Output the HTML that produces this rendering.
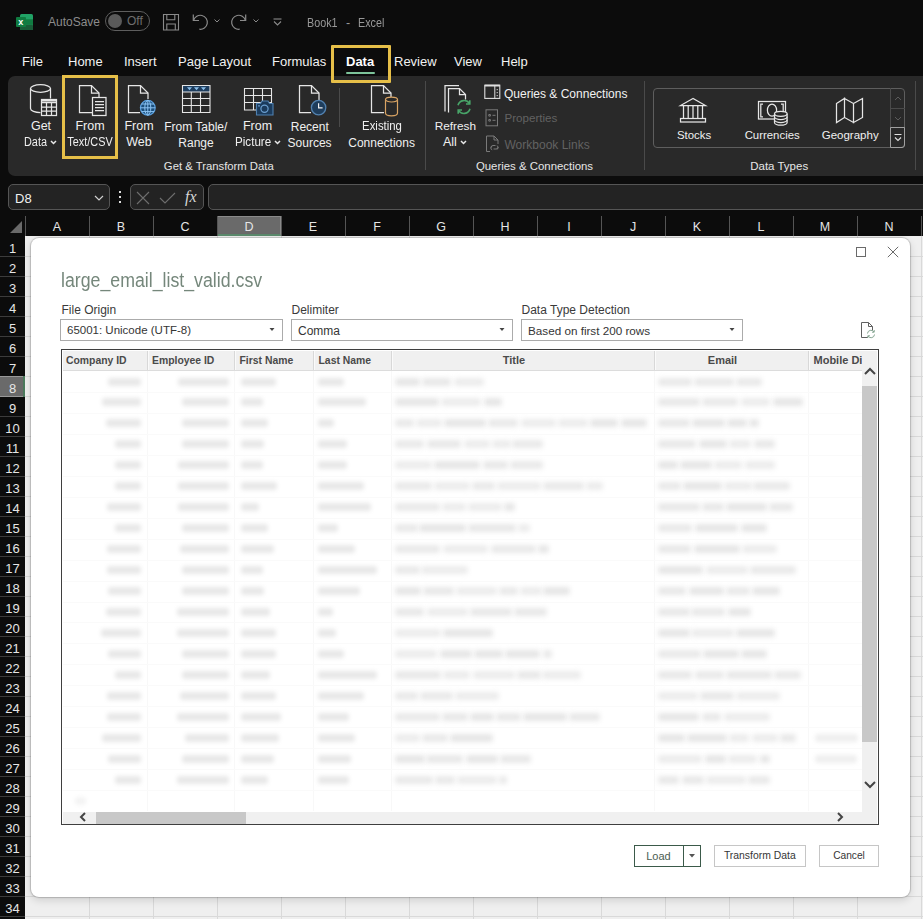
<!DOCTYPE html><html><head><meta charset="utf-8"><style>
*{margin:0;padding:0;box-sizing:border-box}
html,body{width:923px;height:919px;overflow:hidden;background:#0c0c0c;font-family:"Liberation Sans",sans-serif}
.a{position:absolute}
.t{position:absolute;white-space:nowrap;line-height:1}
.menu{color:#f2f2f2;font-size:13px;top:55px}
.rl{position:absolute;white-space:nowrap;line-height:1;color:#f0f0f0;font-size:12.5px;text-align:center}
.gl{position:absolute;white-space:nowrap;line-height:1;color:#e8e8e8;font-size:12px}
.sep{position:absolute;width:1px;background:#4a4a4a}
.ch{position:absolute;line-height:1;color:#e6e6e6;font-size:12.5px;top:221px;text-align:center;width:64px}
.rh{position:absolute;line-height:1;color:#e6e6e6;font-size:13px;width:25px;text-align:center;left:0}
svg{position:absolute;overflow:visible}
</style></head><body>
<div class="a" style="left:0;top:0;width:923px;height:236px;background:#0c0c0c"></div>
<svg style="left:16px;top:14px" width="17" height="16" viewBox="0 0 17 16"><rect x="4" y="0" width="13" height="16" rx="1.5" fill="#21a366"/><rect x="4" y="5.3" width="13" height="5.4" fill="#107c41"/><rect x="4" y="10.7" width="13" height="5.3" rx="1" fill="#185c37"/><rect x="0" y="3" width="10" height="10" rx="1" fill="#107c41"/><text x="2.2" y="11.3" font-size="9" font-family="Liberation Sans" font-weight="bold" fill="#fff">x</text></svg>
<div class="t" style="left:48px;top:16px;font-size:12px;color:#8c8c8c">AutoSave</div>
<div class="a" style="left:105px;top:11px;width:45px;height:20px;border:1.5px solid #5e5e5e;border-radius:10px"></div>
<div class="a" style="left:108px;top:14px;width:14px;height:14px;background:#5a5a5a;border-radius:50%"></div>
<div class="t" style="left:127px;top:15px;font-size:12px;color:#6e6e6e">Off</div>
<svg style="left:163px;top:14px" width="17" height="17" viewBox="0 0 17 17" fill="none" stroke="#8a8a8a" stroke-width="1.1"><path d="M0.5 0.5h15v15.5h-15z"/><path d="M3.8 0.5v5.3h8v-5.3"/><path d="M3.8 16v-6h8.5v6"/></svg>
<svg style="left:192px;top:14px" width="17" height="17" viewBox="0 0 17 17" fill="none" stroke="#8a8a8a" stroke-width="1.2"><path d="M1.3 0.5V6.5H7"/><path d="M1.6 6.4A7 7 0 1 1 7.3 15.2"/></svg>
<svg style="left:214px;top:19px" width="6" height="4" viewBox="0 0 6 4" fill="none" stroke="#8a8a8a" stroke-width="1"><path d="M0.5 0.5l2.5 2.5 2.5-2.5"/></svg>
<svg style="left:231px;top:14px" width="17" height="17" viewBox="0 0 17 17" fill="none" stroke="#8a8a8a" stroke-width="1.2"><path d="M14.7 0.5V6.5H9"/><path d="M14.4 6.4A7 7 0 1 0 8.7 15.2"/></svg>
<svg style="left:253px;top:19px" width="6" height="4" viewBox="0 0 6 4" fill="none" stroke="#8a8a8a" stroke-width="1"><path d="M0.5 0.5l2.5 2.5 2.5-2.5"/></svg>
<svg style="left:273px;top:18px" width="9" height="9" viewBox="0 0 9 9" fill="none" stroke="#8a8a8a" stroke-width="1.1"><path d="M0.5 1h8"/><path d="M1 3.5l3.5 3.5 3.5-3.5"/></svg>
<div class="t" style="left:307px;top:16.82px;font-size:12.5px;color:#989898;font-weight:normal;transform:scaleX(0.86);transform-origin:0 0">Book1</div>
<div class="t" style="left:346px;top:16.82px;font-size:12.5px;color:#989898;font-weight:normal;">-</div>
<div class="t" style="left:357.5px;top:16.82px;font-size:12.5px;color:#989898;font-weight:normal;transform:scaleX(0.86);transform-origin:0 0">Excel</div>
<div class="t menu" style="left:22px">File</div>
<div class="t menu" style="left:68px">Home</div>
<div class="t menu" style="left:124px">Insert</div>
<div class="t menu" style="left:178px">Page Layout</div>
<div class="t menu" style="left:272px">Formulas</div>
<div class="t menu" style="left:394px">Review</div>
<div class="t menu" style="left:454px">View</div>
<div class="t menu" style="left:501px">Help</div>
<div class="t menu" style="left:346px;font-weight:bold;color:#fff">Data</div>
<div class="a" style="left:346px;top:72px;width:29px;height:2px;background:#7dc49a;border-radius:1px"></div>
<div class="a" style="left:8px;top:76px;width:930px;height:100px;background:#292929;border-radius:7px"></div>
<svg style="left:29px;top:84px" width="30" height="33" viewBox="0 0 30 33" fill="none" stroke="#e6e6e6" stroke-width="1.25" ><path d="M1.5 4.5v20c0 2.2 4.4 4 10 4"/><ellipse cx="11.5" cy="4.5" rx="10" ry="3.8"/><path d="M21.5 4.5v10"/><rect x="12.5" y="15.5" width="15" height="16" fill="#292929"/><path d="M12.5 18.5h15M12.5 23h15M12.5 27.2h15M17.5 18.5v13M22.5 18.5v13"/><path d="M12.5 16.6h15" stroke-width="2"/></svg>
<div class="t" style="left:-109px;width:300px;text-align:center;top:120.42px;font-size:12.5px;color:#f0f0f0;font-weight:normal;">Get</div>
<div class="t" style="left:23.5px;top:136.42px;font-size:12.5px;color:#f0f0f0;font-weight:normal;transform:scaleX(0.87);transform-origin:0 0">Data</div>
<svg style="left:50px;top:140px" width="7" height="5" viewBox="0 0 7 5" fill="none" stroke="#e8e8e8" stroke-width="1.5"><path d="M1 1l2.5 2.5L6 1"/></svg>
<svg style="left:78px;top:84px" width="30" height="33" viewBox="0 0 30 33" fill="none" stroke="#e6e6e6" stroke-width="1.25" ><path d="M1.5 1.5h12l7.5 7.5v19.5H1.5z"/><path d="M13.5 1.5v7.5H21"/><rect x="14.5" y="13.5" width="13.5" height="18" fill="#292929"/><path d="M17 17.5h9M17 20.5h9M17 23.5h9M17 26.5h9"/></svg>
<div class="t" style="left:-60px;width:300px;text-align:center;top:120.42px;font-size:12.5px;color:#f0f0f0;font-weight:normal;">From</div>
<div class="t" style="left:-59.7px;width:300px;text-align:center;top:136.42px;font-size:12.5px;color:#f0f0f0;font-weight:normal;transform:scaleX(0.87)">Text/CSV</div>
<div class="a" style="left:62px;top:75px;width:56px;height:84px;border:3.3px solid #e6bf48"></div>
<svg style="left:127px;top:84px" width="30" height="33" viewBox="0 0 30 33" fill="none" stroke="#e6e6e6" stroke-width="1.25" ><path d="M13 28.5H1.5v-27h12l7.5 7.5v6"/><path d="M13.5 1.5v7.5H21"/></svg>
<svg style="left:139px;top:99px" width="18" height="18" viewBox="0 0 18 18"><circle cx="8.8" cy="8.8" r="7.4" fill="#1c4f7c" stroke="#5aa0e0" stroke-width="1.2"/><ellipse cx="8.8" cy="8.8" rx="3" ry="7.4" fill="none" stroke="#8cc4f4" stroke-width="1"/><path d="M1.4 8.8h14.8M2.5 5h12.6M2.5 12.6h12.6M8.8 1.4v14.8" stroke="#8cc4f4" stroke-width="1"/></svg>
<div class="t" style="left:-11px;width:300px;text-align:center;top:120.42px;font-size:12.5px;color:#f0f0f0;font-weight:normal;">From</div>
<div class="t" style="left:-11px;width:300px;text-align:center;top:136.42px;font-size:12.5px;color:#f0f0f0;font-weight:normal;">Web</div>
<svg style="left:181px;top:84px" width="31" height="30" viewBox="0 0 31 30"><rect x="1.5" y="1.5" width="27.5" height="6.5" fill="#1d3d5e"/><path d="M6 3.2l2.5 3 2.5-3zM13 3.2l2.5 3 2.5-3zM20 3.2l2.5 3 2.5-3z" fill="#8cc0ec"/><path d="M1.5 1.5h27.5v27H1.5zM1.5 8h27.5M1.5 14.5h27.5M1.5 21.5h27.5M10.3 8v20.5M19.5 8v20.5" fill="none" stroke="#e6e6e6" stroke-width="1.1"/></svg>
<div class="t" style="left:45.80000000000001px;width:300px;text-align:center;top:120.84px;font-size:12px;color:#f0f0f0;font-weight:normal;">From Table/</div>
<div class="t" style="left:46px;width:300px;text-align:center;top:136.84px;font-size:12px;color:#f0f0f0;font-weight:normal;">Range</div>
<svg style="left:243px;top:87px" width="33" height="30" viewBox="0 0 33 30"><path d="M1.5 1.5h27v21.5H1.5zM1.5 8.5h27M1.5 15.5h27M10.5 1.5v21.5M19.5 1.5v21.5" fill="none" stroke="#e6e6e6" stroke-width="1.1"/><path d="M13.5 16.5h4l1.5-2.5h6l1.5 2.5h3.5v11.5h-16.5z" fill="#1b3b5c" stroke="#4f80b0" stroke-width="1.1"/><circle cx="21.5" cy="21.8" r="3.6" fill="none" stroke="#6b9fd0" stroke-width="1.2"/><circle cx="16" cy="18.8" r="0.9" fill="#6b9fd0"/></svg>
<div class="t" style="left:107.5px;width:300px;text-align:center;top:120.42px;font-size:12.5px;color:#f0f0f0;font-weight:normal;">From</div>
<div class="t" style="left:234.5px;top:136.42px;font-size:12.5px;color:#f0f0f0;font-weight:normal;transform:scaleX(0.93);transform-origin:0 0">Picture</div>
<svg style="left:274px;top:140px" width="7" height="5" viewBox="0 0 7 5" fill="none" stroke="#e8e8e8" stroke-width="1.5"><path d="M1 1l2.5 2.5L6 1"/></svg>
<svg style="left:298px;top:84px" width="30" height="33" viewBox="0 0 30 33" fill="none" stroke="#e6e6e6" stroke-width="1.25" ><path d="M13 28.5H1.5v-27h12l7.5 7.5v7"/><path d="M13.5 1.5v7.5H21"/></svg>
<svg style="left:310px;top:99px" width="18" height="18" viewBox="0 0 18 18"><circle cx="8.6" cy="8.6" r="7.2" fill="#1e3d5c" stroke="#5282b0" stroke-width="1.3"/><path d="M8.6 4.2v4.6h4" fill="none" stroke="#f0f0f0" stroke-width="1.2"/></svg>
<div class="t" style="left:159.8px;width:300px;text-align:center;top:120.84px;font-size:12px;color:#f0f0f0;font-weight:normal;">Recent</div>
<div class="t" style="left:159.60000000000002px;width:300px;text-align:center;top:136.84px;font-size:12px;color:#f0f0f0;font-weight:normal;">Sources</div>
<div class="sep" style="left:339px;top:88px;height:39px"></div>
<svg style="left:370px;top:84px" width="30" height="33" viewBox="0 0 30 33" fill="none" stroke="#e6e6e6" stroke-width="1.25" ><path d="M14 28.5H1.5v-27h12l7.5 7.5v4"/><path d="M13.5 1.5v7.5H21"/></svg>
<svg style="left:384px;top:96px" width="16" height="21" viewBox="0 0 16 21"><path d="M1.5 3.5v13.5c0 1.6 2.6 2.8 6 2.8s6-1.2 6-2.8V3.5" fill="#292929" stroke="#d9a464" stroke-width="1.2"/><ellipse cx="7.5" cy="3.6" rx="6" ry="2.4" fill="#292929" stroke="#d9a464" stroke-width="1.2"/></svg>
<div class="t" style="left:231.5px;width:300px;text-align:center;top:120.42px;font-size:12.5px;color:#f0f0f0;font-weight:normal;transform:scaleX(0.91)">Existing</div>
<div class="t" style="left:231.60000000000002px;width:300px;text-align:center;top:136.84px;font-size:12px;color:#f0f0f0;font-weight:normal;">Connections</div>
<div class="sep" style="left:425px;top:81px;height:89px"></div>
<svg style="left:443px;top:84px" width="32" height="34" viewBox="0 0 32 34" fill="none" stroke="#e6e6e6" stroke-width="1.25" ><path d="M2 27.5V1.5h14"/><path d="M5.5 28.5v-24h11l6 6v5"/><path d="M16.5 4.5v6h6"/></svg>
<svg style="left:455px;top:98px" width="18" height="18" viewBox="0 0 18 18" fill="none" stroke="#48a468" stroke-width="1.6"><path d="M3 7.2a6.3 6.3 0 0 1 11.5-1.6"/><path d="M15 10.8a6.3 6.3 0 0 1-11.5 1.6"/><path d="M14.8 2.2v3.8h-3.8M3.2 15.8V12h3.8"/></svg>
<div class="t" style="left:305.3px;width:300px;text-align:center;top:121.01px;font-size:11.8px;color:#f0f0f0;font-weight:normal;">Refresh</div>
<div class="t" style="left:443px;top:136.42px;font-size:12.5px;color:#f0f0f0;font-weight:normal;">All</div>
<svg style="left:460px;top:140px" width="7" height="5" viewBox="0 0 7 5" fill="none" stroke="#e8e8e8" stroke-width="1.5"><path d="M1 1l2.5 2.5L6 1"/></svg>
<svg style="left:484px;top:84px" width="17" height="16" viewBox="0 0 17 16" fill="none" stroke="#e0e0e0"><rect x="0.8" y="1.2" width="15" height="13.2" stroke-width="1.1"/><path d="M0.8 1.6h15" stroke-width="1.8"/><path d="M10.8 1.5v13" stroke-width="1"/><path d="M13.2 5v1.2M13.2 8v1.2M13.2 11v1.2" stroke-width="1"/></svg>
<div class="t" style="left:504px;top:88.14px;font-size:12px;color:#f2f2f2;font-weight:normal;">Queries &amp; Connections</div>
<svg style="left:485px;top:109px" width="14" height="18" viewBox="0 0 14 18" fill="none" stroke="#7a7a7a" stroke-width="1"><rect x="1" y="0.8" width="11.5" height="16"/><path d="M3.8 5.5h1.6v1.6H3.8zM3.8 10.5h1.6v1.6H3.8zM7.5 6.3h3M7.5 11.3h3"/></svg>
<div class="t" style="left:504.5px;top:112.18px;font-size:11.6px;color:#626262;font-weight:normal;">Properties</div>
<svg style="left:485px;top:135px" width="16" height="18" viewBox="0 0 16 18" fill="none" stroke="#7a7a7a" stroke-width="1"><path d="M5 16.5H1.5V1h7.5l4 4v4"/><path d="M9 1v4h4"/><path d="M6 12.5a2 2 0 0 1 2-2h2.5M13 12a2 2 0 0 1-2 2h-2.5M7.2 14.8a1.8 1.8 0 0 1 0-3.5M11.8 10.8a1.8 1.8 0 0 1 0 3.5"/></svg>
<div class="t" style="left:504.5px;top:138.84px;font-size:12px;color:#626262;font-weight:normal;">Workbook Links</div>
<div class="t" style="left:384.5px;width:300px;text-align:center;top:161.35px;font-size:11.4px;color:#e6e6e6;font-weight:normal;">Queries &amp; Connections</div>
<div class="t" style="left:68.80000000000001px;width:300px;text-align:center;top:161.43px;font-size:11.3px;color:#e6e6e6;font-weight:normal;">Get &amp; Transform Data</div>
<div class="sep" style="left:644px;top:81px;height:89px"></div>
<div class="a" style="left:653px;top:88px;width:252px;height:60px;border:1px solid #5e5e5e;border-radius:4px"></div>
<div class="a" style="left:890px;top:88px;width:1px;height:60px;background:#4a4a4a"></div>
<div class="a" style="left:890px;top:108px;width:15px;height:1px;background:#4a4a4a"></div>
<div class="a" style="left:890px;top:127px;width:15px;height:21px;border:1px solid #a0a0a0;border-radius:0 0 3px 0"></div>
<svg style="left:894px;top:96px" width="8" height="5" viewBox="0 0 8 5" fill="none" stroke="#5a5a5a" stroke-width="1"><path d="M1 4l3-3 3 3"/></svg>
<svg style="left:894px;top:116px" width="8" height="5" viewBox="0 0 8 5" fill="none" stroke="#5a5a5a" stroke-width="1"><path d="M1 1l3 3 3-3"/></svg>
<svg style="left:893px;top:133px" width="10" height="10" viewBox="0 0 10 10" fill="none" stroke="#e0e0e0" stroke-width="1.1"><path d="M1.5 1.5h7M2 4.5l3 3 3-3"/></svg>
<svg style="left:679px;top:97px" width="30" height="27" viewBox="0 0 30 27" fill="none" stroke="#e6e6e6" stroke-width="1.25" ><path d="M14 1.5L1.5 8.5h25z"/><path d="M4.5 8.5v13M9.2 8.5v13M14 8.5v13M18.8 8.5v13M23.5 8.5v13"/><rect x="1.5" y="21.5" width="25" height="3.5"/></svg>
<div class="t" style="left:544px;width:300px;text-align:center;top:130.35px;font-size:11.4px;color:#f0f0f0;font-weight:normal;">Stocks</div>
<svg style="left:757px;top:100px" width="33" height="27" viewBox="0 0 33 27" fill="none" stroke="#e6e6e6" stroke-width="1.25" ><rect x="1.5" y="1.5" width="27" height="17.5"/><path d="M6 4.2H3.8v12.6H6M24 4.2h2.2v12.6H24"/><ellipse cx="15" cy="10.2" rx="4.6" ry="6"/><path d="M17.5 13.8v8.7c0 1.5 3 2.7 6.3 2.7s6.3-1.2 6.3-2.7v-8.7" fill="#292929"/><ellipse cx="23.8" cy="13.8" rx="6.3" ry="2.5" fill="#292929"/><path d="M17.5 16.8c0 1.5 3 2.7 6.3 2.7s6.3-1.2 6.3-2.7M17.5 19.8c0 1.5 3 2.7 6.3 2.7s6.3-1.2 6.3-2.7"/></svg>
<div class="t" style="left:622.2px;width:300px;text-align:center;top:130.35px;font-size:11.4px;color:#f0f0f0;font-weight:normal;">Currencies</div>
<svg style="left:835px;top:97px" width="30" height="27" viewBox="0 0 30 27" fill="none" stroke="#e6e6e6" stroke-width="1.25" ><path d="M1.5 6.5l8-5v19l-8 5zM9.5 1.5l9 5v19l-9-5zM18.5 6.5l9-5v19l-9 5z"/></svg>
<div class="t" style="left:700.2px;width:300px;text-align:center;top:130.27px;font-size:11.5px;color:#f0f0f0;font-weight:normal;">Geography</div>
<div class="t" style="left:629.2px;width:300px;text-align:center;top:161.27px;font-size:11.5px;color:#e6e6e6;font-weight:normal;">Data Types</div>
<div class="sep" style="left:915px;top:81px;height:89px"></div>
<div class="a" style="left:331px;top:45px;width:60px;height:38px;border:3.2px solid #e6bf48;border-radius:1px"></div>
<div class="a" style="left:8px;top:184px;width:102px;height:26px;border:1px solid #555;border-radius:5px;background:#232323"></div>
<div class="t" style="left:15px;top:191.5px;font-size:13px;color:#f0f0f0">D8</div>
<svg style="left:94px;top:195px" width="10" height="6" viewBox="0 0 10 6" fill="none" stroke="#d0d0d0" stroke-width="1.2"><path d="M1 1l4 4 4-4"/></svg>
<div class="a" style="left:119px;top:191px;width:2px;height:2px;background:#ddd"></div>
<div class="a" style="left:119px;top:196px;width:2px;height:2px;background:#ddd"></div>
<div class="a" style="left:119px;top:201px;width:2px;height:2px;background:#ddd"></div>
<div class="a" style="left:130px;top:184px;width:74px;height:26px;border:1px solid #555;border-radius:5px;background:#232323"></div>
<div class="a" style="left:208px;top:184px;width:730px;height:26px;border:1px solid #555;border-radius:5px;background:#232323"></div>
<svg style="left:136px;top:191px" width="14" height="14" viewBox="0 0 14 14" fill="none" stroke="#6e6e6e" stroke-width="1.1"><path d="M1 1l12 12M13 1L1 13"/></svg>
<svg style="left:159px;top:192px" width="17" height="12" viewBox="0 0 17 12" fill="none" stroke="#6e6e6e" stroke-width="1.1"><path d="M1 6l5 5L16 1"/></svg>
<div class="t" style="left:185px;top:189px;font-size:16px;color:#d6d6d6;font-family:'Liberation Serif',serif;font-style:italic">fx</div>
<div class="a" style="left:217px;top:216px;width:64px;height:20px;background:#6a6a6a;border:1px solid #8a8a8a;border-bottom:2px solid #5b8a6c"></div>
<div class="ch" style="left:25px">A</div>
<div class="a" style="left:89px;top:216px;width:1px;height:20px;background:#555"></div>
<div class="ch" style="left:89px">B</div>
<div class="a" style="left:153px;top:216px;width:1px;height:20px;background:#555"></div>
<div class="ch" style="left:153px">C</div>
<div class="a" style="left:217px;top:216px;width:1px;height:20px;background:#555"></div>
<div class="ch" style="left:217px">D</div>
<div class="a" style="left:281px;top:216px;width:1px;height:20px;background:#555"></div>
<div class="ch" style="left:281px">E</div>
<div class="a" style="left:345px;top:216px;width:1px;height:20px;background:#555"></div>
<div class="ch" style="left:345px">F</div>
<div class="a" style="left:409px;top:216px;width:1px;height:20px;background:#555"></div>
<div class="ch" style="left:409px">G</div>
<div class="a" style="left:473px;top:216px;width:1px;height:20px;background:#555"></div>
<div class="ch" style="left:473px">H</div>
<div class="a" style="left:537px;top:216px;width:1px;height:20px;background:#555"></div>
<div class="ch" style="left:537px">I</div>
<div class="a" style="left:601px;top:216px;width:1px;height:20px;background:#555"></div>
<div class="ch" style="left:601px">J</div>
<div class="a" style="left:665px;top:216px;width:1px;height:20px;background:#555"></div>
<div class="ch" style="left:665px">K</div>
<div class="a" style="left:729px;top:216px;width:1px;height:20px;background:#555"></div>
<div class="ch" style="left:729px">L</div>
<div class="a" style="left:793px;top:216px;width:1px;height:20px;background:#555"></div>
<div class="ch" style="left:793px">M</div>
<div class="a" style="left:857px;top:216px;width:1px;height:20px;background:#555"></div>
<div class="ch" style="left:857px">N</div>
<div class="a" style="left:921px;top:216px;width:1px;height:20px;background:#555"></div>
<svg style="left:10px;top:221px" width="12" height="12" viewBox="0 0 12 12"><path d="M12 0V12H0z" fill="#6a6a6a"/></svg>
<div class="a" style="left:25px;top:216px;width:1px;height:20px;background:#555"></div>
<div class="a" style="left:25px;top:236px;width:898px;height:683px;background:#efefef"></div>
<div class="a" style="left:25px;top:256px;width:898px;height:1px;background:#d9d9d9"></div>
<div class="a" style="left:25px;top:276px;width:898px;height:1px;background:#d9d9d9"></div>
<div class="a" style="left:25px;top:296px;width:898px;height:1px;background:#d9d9d9"></div>
<div class="a" style="left:25px;top:316px;width:898px;height:1px;background:#d9d9d9"></div>
<div class="a" style="left:25px;top:336px;width:898px;height:1px;background:#d9d9d9"></div>
<div class="a" style="left:25px;top:356px;width:898px;height:1px;background:#d9d9d9"></div>
<div class="a" style="left:25px;top:376px;width:898px;height:1px;background:#d9d9d9"></div>
<div class="a" style="left:25px;top:396px;width:898px;height:1px;background:#d9d9d9"></div>
<div class="a" style="left:25px;top:416px;width:898px;height:1px;background:#d9d9d9"></div>
<div class="a" style="left:25px;top:436px;width:898px;height:1px;background:#d9d9d9"></div>
<div class="a" style="left:25px;top:456px;width:898px;height:1px;background:#d9d9d9"></div>
<div class="a" style="left:25px;top:476px;width:898px;height:1px;background:#d9d9d9"></div>
<div class="a" style="left:25px;top:496px;width:898px;height:1px;background:#d9d9d9"></div>
<div class="a" style="left:25px;top:516px;width:898px;height:1px;background:#d9d9d9"></div>
<div class="a" style="left:25px;top:536px;width:898px;height:1px;background:#d9d9d9"></div>
<div class="a" style="left:25px;top:556px;width:898px;height:1px;background:#d9d9d9"></div>
<div class="a" style="left:25px;top:576px;width:898px;height:1px;background:#d9d9d9"></div>
<div class="a" style="left:25px;top:596px;width:898px;height:1px;background:#d9d9d9"></div>
<div class="a" style="left:25px;top:616px;width:898px;height:1px;background:#d9d9d9"></div>
<div class="a" style="left:25px;top:636px;width:898px;height:1px;background:#d9d9d9"></div>
<div class="a" style="left:25px;top:656px;width:898px;height:1px;background:#d9d9d9"></div>
<div class="a" style="left:25px;top:676px;width:898px;height:1px;background:#d9d9d9"></div>
<div class="a" style="left:25px;top:696px;width:898px;height:1px;background:#d9d9d9"></div>
<div class="a" style="left:25px;top:716px;width:898px;height:1px;background:#d9d9d9"></div>
<div class="a" style="left:25px;top:736px;width:898px;height:1px;background:#d9d9d9"></div>
<div class="a" style="left:25px;top:756px;width:898px;height:1px;background:#d9d9d9"></div>
<div class="a" style="left:25px;top:776px;width:898px;height:1px;background:#d9d9d9"></div>
<div class="a" style="left:25px;top:796px;width:898px;height:1px;background:#d9d9d9"></div>
<div class="a" style="left:25px;top:816px;width:898px;height:1px;background:#d9d9d9"></div>
<div class="a" style="left:25px;top:836px;width:898px;height:1px;background:#d9d9d9"></div>
<div class="a" style="left:25px;top:856px;width:898px;height:1px;background:#d9d9d9"></div>
<div class="a" style="left:25px;top:876px;width:898px;height:1px;background:#d9d9d9"></div>
<div class="a" style="left:25px;top:896px;width:898px;height:1px;background:#d9d9d9"></div>
<div class="a" style="left:25px;top:916px;width:898px;height:1px;background:#d9d9d9"></div>
<div class="a" style="left:89px;top:236px;width:1px;height:683px;background:#d9d9d9"></div>
<div class="a" style="left:153px;top:236px;width:1px;height:683px;background:#d9d9d9"></div>
<div class="a" style="left:217px;top:236px;width:1px;height:683px;background:#d9d9d9"></div>
<div class="a" style="left:281px;top:236px;width:1px;height:683px;background:#d9d9d9"></div>
<div class="a" style="left:345px;top:236px;width:1px;height:683px;background:#d9d9d9"></div>
<div class="a" style="left:409px;top:236px;width:1px;height:683px;background:#d9d9d9"></div>
<div class="a" style="left:473px;top:236px;width:1px;height:683px;background:#d9d9d9"></div>
<div class="a" style="left:537px;top:236px;width:1px;height:683px;background:#d9d9d9"></div>
<div class="a" style="left:601px;top:236px;width:1px;height:683px;background:#d9d9d9"></div>
<div class="a" style="left:665px;top:236px;width:1px;height:683px;background:#d9d9d9"></div>
<div class="a" style="left:729px;top:236px;width:1px;height:683px;background:#d9d9d9"></div>
<div class="a" style="left:793px;top:236px;width:1px;height:683px;background:#d9d9d9"></div>
<div class="a" style="left:857px;top:236px;width:1px;height:683px;background:#d9d9d9"></div>
<div class="a" style="left:921px;top:236px;width:1px;height:683px;background:#d9d9d9"></div>
<div class="a" style="left:0;top:236px;width:25px;height:683px;background:#0c0c0c"></div>
<div class="a" style="left:0;top:376px;width:25px;height:21px;background:#6a6a6a;border-top:1px solid #999;border-bottom:1px solid #999"></div>
<div class="a" style="left:23px;top:376px;width:2px;height:21px;background:#4b7a5c"></div>
<div class="rh" style="top:241.5px">1</div>
<div class="a" style="left:0;top:256px;width:25px;height:1px;background:#3c3c3c"></div>
<div class="rh" style="top:261.5px">2</div>
<div class="a" style="left:0;top:276px;width:25px;height:1px;background:#3c3c3c"></div>
<div class="rh" style="top:281.5px">3</div>
<div class="a" style="left:0;top:296px;width:25px;height:1px;background:#3c3c3c"></div>
<div class="rh" style="top:301.5px">4</div>
<div class="a" style="left:0;top:316px;width:25px;height:1px;background:#3c3c3c"></div>
<div class="rh" style="top:321.5px">5</div>
<div class="a" style="left:0;top:336px;width:25px;height:1px;background:#3c3c3c"></div>
<div class="rh" style="top:341.5px">6</div>
<div class="a" style="left:0;top:356px;width:25px;height:1px;background:#3c3c3c"></div>
<div class="rh" style="top:361.5px">7</div>
<div class="rh" style="top:381.5px">8</div>
<div class="rh" style="top:401.5px">9</div>
<div class="a" style="left:0;top:416px;width:25px;height:1px;background:#3c3c3c"></div>
<div class="rh" style="top:421.5px">10</div>
<div class="a" style="left:0;top:436px;width:25px;height:1px;background:#3c3c3c"></div>
<div class="rh" style="top:441.5px">11</div>
<div class="a" style="left:0;top:456px;width:25px;height:1px;background:#3c3c3c"></div>
<div class="rh" style="top:461.5px">12</div>
<div class="a" style="left:0;top:476px;width:25px;height:1px;background:#3c3c3c"></div>
<div class="rh" style="top:481.5px">13</div>
<div class="a" style="left:0;top:496px;width:25px;height:1px;background:#3c3c3c"></div>
<div class="rh" style="top:501.5px">14</div>
<div class="a" style="left:0;top:516px;width:25px;height:1px;background:#3c3c3c"></div>
<div class="rh" style="top:521.5px">15</div>
<div class="a" style="left:0;top:536px;width:25px;height:1px;background:#3c3c3c"></div>
<div class="rh" style="top:541.5px">16</div>
<div class="a" style="left:0;top:556px;width:25px;height:1px;background:#3c3c3c"></div>
<div class="rh" style="top:561.5px">17</div>
<div class="a" style="left:0;top:576px;width:25px;height:1px;background:#3c3c3c"></div>
<div class="rh" style="top:581.5px">18</div>
<div class="a" style="left:0;top:596px;width:25px;height:1px;background:#3c3c3c"></div>
<div class="rh" style="top:601.5px">19</div>
<div class="a" style="left:0;top:616px;width:25px;height:1px;background:#3c3c3c"></div>
<div class="rh" style="top:621.5px">20</div>
<div class="a" style="left:0;top:636px;width:25px;height:1px;background:#3c3c3c"></div>
<div class="rh" style="top:641.5px">21</div>
<div class="a" style="left:0;top:656px;width:25px;height:1px;background:#3c3c3c"></div>
<div class="rh" style="top:661.5px">22</div>
<div class="a" style="left:0;top:676px;width:25px;height:1px;background:#3c3c3c"></div>
<div class="rh" style="top:681.5px">23</div>
<div class="a" style="left:0;top:696px;width:25px;height:1px;background:#3c3c3c"></div>
<div class="rh" style="top:701.5px">24</div>
<div class="a" style="left:0;top:716px;width:25px;height:1px;background:#3c3c3c"></div>
<div class="rh" style="top:721.5px">25</div>
<div class="a" style="left:0;top:736px;width:25px;height:1px;background:#3c3c3c"></div>
<div class="rh" style="top:741.5px">26</div>
<div class="a" style="left:0;top:756px;width:25px;height:1px;background:#3c3c3c"></div>
<div class="rh" style="top:761.5px">27</div>
<div class="a" style="left:0;top:776px;width:25px;height:1px;background:#3c3c3c"></div>
<div class="rh" style="top:781.5px">28</div>
<div class="a" style="left:0;top:796px;width:25px;height:1px;background:#3c3c3c"></div>
<div class="rh" style="top:801.5px">29</div>
<div class="a" style="left:0;top:816px;width:25px;height:1px;background:#3c3c3c"></div>
<div class="rh" style="top:821.5px">30</div>
<div class="a" style="left:0;top:836px;width:25px;height:1px;background:#3c3c3c"></div>
<div class="rh" style="top:841.5px">31</div>
<div class="a" style="left:0;top:856px;width:25px;height:1px;background:#3c3c3c"></div>
<div class="rh" style="top:861.5px">32</div>
<div class="a" style="left:0;top:876px;width:25px;height:1px;background:#3c3c3c"></div>
<div class="rh" style="top:881.5px">33</div>
<div class="a" style="left:0;top:896px;width:25px;height:1px;background:#3c3c3c"></div>
<div class="rh" style="top:901.5px">34</div>
<div class="a" style="left:0;top:916px;width:25px;height:1px;background:#3c3c3c"></div>
<div class="rh" style="top:921.5px">35</div>
<div class="a" style="left:0;top:936px;width:25px;height:1px;background:#3c3c3c"></div>
<div class="a" style="left:31px;top:238px;width:879px;height:659px;background:#fff;border-radius:8px;box-shadow:0 0 1px 1px rgba(0,0,0,.18),0 3px 8px rgba(0,0,0,.14)"></div>
<div class="a" style="left:856px;top:247px;width:10px;height:10px;border:1px solid #6a6a6a"></div>
<svg style="left:887px;top:246px" width="12" height="12" viewBox="0 0 12 12" fill="none" stroke="#6a6a6a" stroke-width="1"><path d="M0.8 0.8l10.4 10.4M11.2 0.8L0.8 11.2"/></svg>
<div class="t" style="left:61px;top:269.8px;font-size:20px;color:#75877b;transform:scaleX(0.887);transform-origin:0 0">large_email_list_valid.csv</div>
<div class="t" style="left:61.5px;top:304.34px;font-size:12px;color:#3a3a3a;font-weight:normal;">File Origin</div>
<div class="t" style="left:291.5px;top:304.34px;font-size:12px;color:#3a3a3a;font-weight:normal;">Delimiter</div>
<div class="t" style="left:521.5px;top:304.34px;font-size:12px;color:#3a3a3a;font-weight:normal;">Data Type Detection</div>
<div class="a" style="left:60px;top:319px;width:223px;height:22px;border:1px solid #ababab;background:#fff"></div>
<div class="t" style="left:67px;top:325.27px;font-size:11.5px;color:#353535;font-weight:normal;">65001: Unicode (UTF-8)</div>
<svg style="left:269px;top:328px" width="6" height="4" viewBox="0 0 6 4"><path d="M0.5 0h5L3 3z" fill="#444"/></svg>
<div class="a" style="left:291px;top:319px;width:222px;height:22px;border:1px solid #ababab;background:#fff"></div>
<div class="t" style="left:298px;top:324.84px;font-size:12px;color:#353535;font-weight:normal;">Comma</div>
<svg style="left:499px;top:328px" width="6" height="4" viewBox="0 0 6 4"><path d="M0.5 0h5L3 3z" fill="#444"/></svg>
<div class="a" style="left:521px;top:319px;width:222px;height:22px;border:1px solid #ababab;background:#fff"></div>
<div class="t" style="left:528px;top:325.10px;font-size:11.7px;color:#353535;font-weight:normal;">Based on first 200 rows</div>
<svg style="left:729px;top:328px" width="6" height="4" viewBox="0 0 6 4"><path d="M0.5 0h5L3 3z" fill="#444"/></svg>
<svg style="left:860px;top:321px" width="16" height="18" viewBox="0 0 16 18" fill="none" stroke="#606060" stroke-width="1"><path d="M8 16.5H1.5V1.5h7l4 4v4"/><path d="M8.5 1.5v4h4"/></svg>
<svg style="left:866px;top:329px" width="10" height="10" viewBox="0 0 10 10" fill="none" stroke="#86a592" stroke-width="1"><path d="M1.5 4.5a3.5 3.5 0 0 1 6.5-1.5M8.5 5.5a3.5 3.5 0 0 1-6.5 1.5"/><path d="M8.2 1v2.2H6M1.8 9V6.8H4"/></svg>
<div class="a" style="left:61px;top:349px;width:818px;height:476px;border:1.5px solid #3f3f3f;background:#fff"></div>
<div class="a" style="left:63px;top:350.5px;width:799px;height:20px;background:#f0f0f0;border-bottom:1px solid #dcdcdc"></div>
<div class="a" style="left:147px;top:351px;width:1px;height:19px;background:#d8d8d8"></div>
<div class="a" style="left:148px;top:351px;width:1px;height:19px;background:#fafafa"></div>
<div class="a" style="left:234px;top:351px;width:1px;height:19px;background:#d8d8d8"></div>
<div class="a" style="left:235px;top:351px;width:1px;height:19px;background:#fafafa"></div>
<div class="a" style="left:313px;top:351px;width:1px;height:19px;background:#d8d8d8"></div>
<div class="a" style="left:314px;top:351px;width:1px;height:19px;background:#fafafa"></div>
<div class="a" style="left:391px;top:351px;width:1px;height:19px;background:#d8d8d8"></div>
<div class="a" style="left:392px;top:351px;width:1px;height:19px;background:#fafafa"></div>
<div class="a" style="left:654px;top:351px;width:1px;height:19px;background:#d8d8d8"></div>
<div class="a" style="left:655px;top:351px;width:1px;height:19px;background:#fafafa"></div>
<div class="a" style="left:808px;top:351px;width:1px;height:19px;background:#d8d8d8"></div>
<div class="a" style="left:809px;top:351px;width:1px;height:19px;background:#fafafa"></div>
<div class="t" style="left:66px;top:355.70px;font-size:10.4px;color:#4a4a4a;font-weight:bold;">Company ID</div>
<div class="t" style="left:152px;top:355.70px;font-size:10.4px;color:#4a4a4a;font-weight:bold;">Employee ID</div>
<div class="t" style="left:239.5px;top:355.70px;font-size:10.4px;color:#4a4a4a;font-weight:bold;">First Name</div>
<div class="t" style="left:318.5px;top:355.70px;font-size:10.4px;color:#4a4a4a;font-weight:bold;">Last Name</div>
<div class="t" style="left:364px;width:300px;text-align:center;top:355.19px;font-size:11px;color:#4a4a4a;font-weight:bold;">Title</div>
<div class="t" style="left:572.5px;width:300px;text-align:center;top:355.19px;font-size:11px;color:#4a4a4a;font-weight:bold;">Email</div>
<div class="t" style="left:813.5px;top:355.19px;font-size:11px;color:#4a4a4a;font-weight:bold;">Mobile Di</div>
<div class="a" style="left:147px;top:371px;width:1px;height:440px;background:#f8f8f8"></div>
<div class="a" style="left:234px;top:371px;width:1px;height:440px;background:#f8f8f8"></div>
<div class="a" style="left:313px;top:371px;width:1px;height:440px;background:#f8f8f8"></div>
<div class="a" style="left:391px;top:371px;width:1px;height:440px;background:#f8f8f8"></div>
<div class="a" style="left:654px;top:371px;width:1px;height:440px;background:#f8f8f8"></div>
<div class="a" style="left:808px;top:371px;width:1px;height:440px;background:#f8f8f8"></div>
<div class="a" style="left:862px;top:351px;width:15px;height:461px;background:#f0f0f0"></div>
<div class="a" style="left:862px;top:386px;width:15px;height:356px;background:#c8c8c8"></div>
<svg style="left:864px;top:367px" width="12" height="8" viewBox="0 0 12 8" fill="none" stroke="#444" stroke-width="2"><path d="M1 7l5-5 5 5"/></svg>
<svg style="left:864px;top:781px" width="12" height="8" viewBox="0 0 12 8" fill="none" stroke="#444" stroke-width="2"><path d="M1 1l5 5 5-5"/></svg>
<div class="a" style="left:63px;top:812px;width:814px;height:11.5px;background:#f0f0f0"></div>
<div class="a" style="left:96px;top:812px;width:150px;height:11.5px;background:#c8c8c8"></div>
<svg style="left:79px;top:812px" width="8" height="10" viewBox="0 0 8 10" fill="none" stroke="#444" stroke-width="2"><path d="M6 1L2 5l4 4"/></svg>
<svg style="left:836px;top:812px" width="8" height="10" viewBox="0 0 8 10" fill="none" stroke="#444" stroke-width="2"><path d="M2 1l4 4-4 4"/></svg>
<div class="a" style="left:108.0px;top:377.5px;width:33.0px;height:8px;background:#e8e8e8;opacity:1.0;filter:blur(2.2px);border-radius:3px"></div>
<div class="a" style="left:178.0px;top:377.5px;width:51.0px;height:8px;background:#e8e8e8;opacity:1.0;filter:blur(2.2px);border-radius:3px"></div>
<div class="a" style="left:240.5px;top:377.5px;width:35.0px;height:8px;background:#e8e8e8;opacity:1.0;filter:blur(2.2px);border-radius:3px"></div>
<div class="a" style="left:317.9px;top:377.5px;width:25.7px;height:8px;background:#e8e8e8;opacity:1.0;filter:blur(2.2px);border-radius:3px"></div>
<div class="a" style="left:395.2px;top:377.5px;width:25.1px;height:8px;background:#e6e6e6;opacity:1.0;filter:blur(2.5px);border-radius:3px"></div>
<div class="a" style="left:422.4px;top:377.5px;width:29.1px;height:8px;background:#e8e8e8;opacity:1.0;filter:blur(2.5px);border-radius:3px"></div>
<div class="a" style="left:453.6px;top:377.5px;width:30.0px;height:8px;background:#ececec;opacity:1.0;filter:blur(2.5px);border-radius:3px"></div>
<div class="a" style="left:657.8px;top:377.5px;width:34.5px;height:8px;background:#e9e9e9;opacity:1.0;filter:blur(2.5px);border-radius:3px"></div>
<div class="a" style="left:694.0px;top:377.5px;width:39.5px;height:8px;background:#e9e9e9;opacity:1.0;filter:blur(2.5px);border-radius:3px"></div>
<div class="a" style="left:735.6px;top:377.5px;width:26.2px;height:8px;background:#e9e9e9;opacity:1.0;filter:blur(2.5px);border-radius:3px"></div>
<div class="a" style="left:102.4px;top:398.4px;width:38.6px;height:8px;background:#e8e8e8;opacity:1.0;filter:blur(2.2px);border-radius:3px"></div>
<div class="a" style="left:181.6px;top:398.4px;width:47.4px;height:8px;background:#e8e8e8;opacity:1.0;filter:blur(2.2px);border-radius:3px"></div>
<div class="a" style="left:240.5px;top:398.4px;width:22.1px;height:8px;background:#e8e8e8;opacity:1.0;filter:blur(2.2px);border-radius:3px"></div>
<div class="a" style="left:317.9px;top:398.4px;width:47.8px;height:8px;background:#e8e8e8;opacity:1.0;filter:blur(2.2px);border-radius:3px"></div>
<div class="a" style="left:395.2px;top:398.4px;width:44.0px;height:8px;background:#e6e6e6;opacity:1.0;filter:blur(2.5px);border-radius:3px"></div>
<div class="a" style="left:441.3px;top:398.4px;width:40.2px;height:8px;background:#ececec;opacity:1.0;filter:blur(2.5px);border-radius:3px"></div>
<div class="a" style="left:483.7px;top:398.4px;width:18.1px;height:8px;background:#e6e6e6;opacity:1.0;filter:blur(2.5px);border-radius:3px"></div>
<div class="a" style="left:657.8px;top:398.4px;width:42.7px;height:8px;background:#e8e8e8;opacity:1.0;filter:blur(2.5px);border-radius:3px"></div>
<div class="a" style="left:702.3px;top:398.4px;width:35.8px;height:8px;background:#e9e9e9;opacity:1.0;filter:blur(2.5px);border-radius:3px"></div>
<div class="a" style="left:740.5px;top:398.4px;width:29.6px;height:8px;background:#ececec;opacity:1.0;filter:blur(2.5px);border-radius:3px"></div>
<div class="a" style="left:772.5px;top:398.4px;width:30.9px;height:8px;background:#e6e6e6;opacity:1.0;filter:blur(2.5px);border-radius:3px"></div>
<div class="a" style="left:106.0px;top:419.4px;width:35.0px;height:8px;background:#e8e8e8;opacity:1.0;filter:blur(2.2px);border-radius:3px"></div>
<div class="a" style="left:181.6px;top:419.4px;width:47.4px;height:8px;background:#e8e8e8;opacity:1.0;filter:blur(2.2px);border-radius:3px"></div>
<div class="a" style="left:240.5px;top:419.4px;width:27.5px;height:8px;background:#e8e8e8;opacity:1.0;filter:blur(2.2px);border-radius:3px"></div>
<div class="a" style="left:317.9px;top:419.4px;width:16.5px;height:8px;background:#e8e8e8;opacity:1.0;filter:blur(2.2px);border-radius:3px"></div>
<div class="a" style="left:395.2px;top:419.4px;width:19.1px;height:8px;background:#e9e9e9;opacity:1.0;filter:blur(2.5px);border-radius:3px"></div>
<div class="a" style="left:416.3px;top:419.4px;width:25.7px;height:8px;background:#ececec;opacity:1.0;filter:blur(2.5px);border-radius:3px"></div>
<div class="a" style="left:444.2px;top:419.4px;width:41.4px;height:8px;background:#e6e6e6;opacity:1.0;filter:blur(2.5px);border-radius:3px"></div>
<div class="a" style="left:487.9px;top:419.4px;width:30.6px;height:8px;background:#e9e9e9;opacity:1.0;filter:blur(2.5px);border-radius:3px"></div>
<div class="a" style="left:520.9px;top:419.4px;width:35.2px;height:8px;background:#ececec;opacity:1.0;filter:blur(2.5px);border-radius:3px"></div>
<div class="a" style="left:558.1px;top:419.4px;width:30.2px;height:8px;background:#ececec;opacity:1.0;filter:blur(2.5px);border-radius:3px"></div>
<div class="a" style="left:590.1px;top:419.4px;width:28.1px;height:8px;background:#e6e6e6;opacity:1.0;filter:blur(2.5px);border-radius:3px"></div>
<div class="a" style="left:620.6px;top:419.4px;width:26.8px;height:8px;background:#e6e6e6;opacity:1.0;filter:blur(2.5px);border-radius:3px"></div>
<div class="a" style="left:657.8px;top:419.4px;width:32.5px;height:8px;background:#e8e8e8;opacity:1.0;filter:blur(2.5px);border-radius:3px"></div>
<div class="a" style="left:692.4px;top:419.4px;width:32.5px;height:8px;background:#e6e6e6;opacity:1.0;filter:blur(2.5px);border-radius:3px"></div>
<div class="a" style="left:726.7px;top:419.4px;width:20.0px;height:8px;background:#e6e6e6;opacity:1.0;filter:blur(2.5px);border-radius:3px"></div>
<div class="a" style="left:749.1px;top:419.4px;width:10.1px;height:8px;background:#e6e6e6;opacity:1.0;filter:blur(2.5px);border-radius:3px"></div>
<div class="a" style="left:114.5px;top:440.4px;width:26.5px;height:8px;background:#e8e8e8;opacity:1.0;filter:blur(2.2px);border-radius:3px"></div>
<div class="a" style="left:181.6px;top:440.4px;width:47.4px;height:8px;background:#e8e8e8;opacity:1.0;filter:blur(2.2px);border-radius:3px"></div>
<div class="a" style="left:240.5px;top:440.4px;width:23.9px;height:8px;background:#e8e8e8;opacity:1.0;filter:blur(2.2px);border-radius:3px"></div>
<div class="a" style="left:317.9px;top:440.4px;width:29.4px;height:8px;background:#e8e8e8;opacity:1.0;filter:blur(2.2px);border-radius:3px"></div>
<div class="a" style="left:395.2px;top:440.4px;width:29.3px;height:8px;background:#e9e9e9;opacity:1.0;filter:blur(2.5px);border-radius:3px"></div>
<div class="a" style="left:426.6px;top:440.4px;width:34.5px;height:8px;background:#e8e8e8;opacity:1.0;filter:blur(2.5px);border-radius:3px"></div>
<div class="a" style="left:463.6px;top:440.4px;width:26.4px;height:8px;background:#ececec;opacity:1.0;filter:blur(2.5px);border-radius:3px"></div>
<div class="a" style="left:491.7px;top:440.4px;width:19.1px;height:8px;background:#ececec;opacity:1.0;filter:blur(2.5px);border-radius:3px"></div>
<div class="a" style="left:512.3px;top:440.4px;width:31.1px;height:8px;background:#e9e9e9;opacity:1.0;filter:blur(2.5px);border-radius:3px"></div>
<div class="a" style="left:657.8px;top:440.4px;width:38.7px;height:8px;background:#e8e8e8;opacity:1.0;filter:blur(2.5px);border-radius:3px"></div>
<div class="a" style="left:699.0px;top:440.4px;width:28.2px;height:8px;background:#e6e6e6;opacity:1.0;filter:blur(2.5px);border-radius:3px"></div>
<div class="a" style="left:729.0px;top:440.4px;width:22.1px;height:8px;background:#ececec;opacity:1.0;filter:blur(2.5px);border-radius:3px"></div>
<div class="a" style="left:753.5px;top:440.4px;width:21.3px;height:8px;background:#e8e8e8;opacity:1.0;filter:blur(2.5px);border-radius:3px"></div>
<div class="a" style="left:115.3px;top:461.3px;width:25.7px;height:8px;background:#e8e8e8;opacity:1.0;filter:blur(2.2px);border-radius:3px"></div>
<div class="a" style="left:178.0px;top:461.3px;width:51.0px;height:8px;background:#e8e8e8;opacity:1.0;filter:blur(2.2px);border-radius:3px"></div>
<div class="a" style="left:240.5px;top:461.3px;width:22.1px;height:8px;background:#e8e8e8;opacity:1.0;filter:blur(2.2px);border-radius:3px"></div>
<div class="a" style="left:317.9px;top:461.3px;width:29.4px;height:8px;background:#e8e8e8;opacity:1.0;filter:blur(2.2px);border-radius:3px"></div>
<div class="a" style="left:395.2px;top:461.3px;width:37.0px;height:8px;background:#ececec;opacity:1.0;filter:blur(2.5px);border-radius:3px"></div>
<div class="a" style="left:434.4px;top:461.3px;width:46.1px;height:8px;background:#e6e6e6;opacity:1.0;filter:blur(2.5px);border-radius:3px"></div>
<div class="a" style="left:482.5px;top:461.3px;width:25.7px;height:8px;background:#e8e8e8;opacity:1.0;filter:blur(2.5px);border-radius:3px"></div>
<div class="a" style="left:510.0px;top:461.3px;width:33.4px;height:8px;background:#e9e9e9;opacity:1.0;filter:blur(2.5px);border-radius:3px"></div>
<div class="a" style="left:657.8px;top:461.3px;width:19.8px;height:8px;background:#e6e6e6;opacity:1.0;filter:blur(2.5px);border-radius:3px"></div>
<div class="a" style="left:679.7px;top:461.3px;width:32.0px;height:8px;background:#e6e6e6;opacity:1.0;filter:blur(2.5px);border-radius:3px"></div>
<div class="a" style="left:713.9px;top:461.3px;width:28.6px;height:8px;background:#ececec;opacity:1.0;filter:blur(2.5px);border-radius:3px"></div>
<div class="a" style="left:744.7px;top:461.3px;width:30.1px;height:8px;background:#ececec;opacity:1.0;filter:blur(2.5px);border-radius:3px"></div>
<div class="a" style="left:114.5px;top:482.2px;width:26.5px;height:8px;background:#e8e8e8;opacity:1.0;filter:blur(2.2px);border-radius:3px"></div>
<div class="a" style="left:178.0px;top:482.2px;width:51.0px;height:8px;background:#e8e8e8;opacity:1.0;filter:blur(2.2px);border-radius:3px"></div>
<div class="a" style="left:240.5px;top:482.2px;width:36.8px;height:8px;background:#e8e8e8;opacity:1.0;filter:blur(2.2px);border-radius:3px"></div>
<div class="a" style="left:317.9px;top:482.2px;width:46.1px;height:8px;background:#e8e8e8;opacity:1.0;filter:blur(2.2px);border-radius:3px"></div>
<div class="a" style="left:395.2px;top:482.2px;width:36.8px;height:8px;background:#e9e9e9;opacity:1.0;filter:blur(2.5px);border-radius:3px"></div>
<div class="a" style="left:433.8px;top:482.2px;width:36.0px;height:8px;background:#ececec;opacity:1.0;filter:blur(2.5px);border-radius:3px"></div>
<div class="a" style="left:471.6px;top:482.2px;width:23.6px;height:8px;background:#e9e9e9;opacity:1.0;filter:blur(2.5px);border-radius:3px"></div>
<div class="a" style="left:497.4px;top:482.2px;width:43.3px;height:8px;background:#ececec;opacity:1.0;filter:blur(2.5px);border-radius:3px"></div>
<div class="a" style="left:542.5px;top:482.2px;width:41.6px;height:8px;background:#e9e9e9;opacity:1.0;filter:blur(2.5px);border-radius:3px"></div>
<div class="a" style="left:585.7px;top:482.2px;width:17.5px;height:8px;background:#ececec;opacity:1.0;filter:blur(2.5px);border-radius:3px"></div>
<div class="a" style="left:657.8px;top:482.2px;width:23.6px;height:8px;background:#e9e9e9;opacity:1.0;filter:blur(2.5px);border-radius:3px"></div>
<div class="a" style="left:683.4px;top:482.2px;width:38.9px;height:8px;background:#e6e6e6;opacity:1.0;filter:blur(2.5px);border-radius:3px"></div>
<div class="a" style="left:723.9px;top:482.2px;width:27.7px;height:8px;background:#ececec;opacity:1.0;filter:blur(2.5px);border-radius:3px"></div>
<div class="a" style="left:753.4px;top:482.2px;width:37.0px;height:8px;background:#e9e9e9;opacity:1.0;filter:blur(2.5px);border-radius:3px"></div>
<div class="a" style="left:107.2px;top:503.2px;width:33.8px;height:8px;background:#e8e8e8;opacity:1.0;filter:blur(2.2px);border-radius:3px"></div>
<div class="a" style="left:178.0px;top:503.2px;width:51.0px;height:8px;background:#e8e8e8;opacity:1.0;filter:blur(2.2px);border-radius:3px"></div>
<div class="a" style="left:240.5px;top:503.2px;width:18.4px;height:8px;background:#e8e8e8;opacity:1.0;filter:blur(2.2px);border-radius:3px"></div>
<div class="a" style="left:317.9px;top:503.2px;width:53.4px;height:8px;background:#e8e8e8;opacity:1.0;filter:blur(2.2px);border-radius:3px"></div>
<div class="a" style="left:395.2px;top:503.2px;width:44.5px;height:8px;background:#e9e9e9;opacity:1.0;filter:blur(2.5px);border-radius:3px"></div>
<div class="a" style="left:441.7px;top:503.2px;width:24.8px;height:8px;background:#ececec;opacity:1.0;filter:blur(2.5px);border-radius:3px"></div>
<div class="a" style="left:468.1px;top:503.2px;width:33.9px;height:8px;background:#ececec;opacity:1.0;filter:blur(2.5px);border-radius:3px"></div>
<div class="a" style="left:503.6px;top:503.2px;width:11.2px;height:8px;background:#e6e6e6;opacity:1.0;filter:blur(2.5px);border-radius:3px"></div>
<div class="a" style="left:657.8px;top:503.2px;width:42.2px;height:8px;background:#e8e8e8;opacity:1.0;filter:blur(2.5px);border-radius:3px"></div>
<div class="a" style="left:701.8px;top:503.2px;width:21.9px;height:8px;background:#e8e8e8;opacity:1.0;filter:blur(2.5px);border-radius:3px"></div>
<div class="a" style="left:725.5px;top:503.2px;width:41.8px;height:8px;background:#e6e6e6;opacity:1.0;filter:blur(2.5px);border-radius:3px"></div>
<div class="a" style="left:769.1px;top:503.2px;width:23.9px;height:8px;background:#e8e8e8;opacity:1.0;filter:blur(2.5px);border-radius:3px"></div>
<div class="a" style="left:115.3px;top:524.1px;width:25.7px;height:8px;background:#e8e8e8;opacity:1.0;filter:blur(2.2px);border-radius:3px"></div>
<div class="a" style="left:181.6px;top:524.1px;width:47.4px;height:8px;background:#e8e8e8;opacity:1.0;filter:blur(2.2px);border-radius:3px"></div>
<div class="a" style="left:240.5px;top:524.1px;width:27.5px;height:8px;background:#e8e8e8;opacity:1.0;filter:blur(2.2px);border-radius:3px"></div>
<div class="a" style="left:317.9px;top:524.1px;width:20.2px;height:8px;background:#e8e8e8;opacity:1.0;filter:blur(2.2px);border-radius:3px"></div>
<div class="a" style="left:395.2px;top:524.1px;width:22.7px;height:8px;background:#e9e9e9;opacity:1.0;filter:blur(2.5px);border-radius:3px"></div>
<div class="a" style="left:419.4px;top:524.1px;width:46.3px;height:8px;background:#e6e6e6;opacity:1.0;filter:blur(2.5px);border-radius:3px"></div>
<div class="a" style="left:468.1px;top:524.1px;width:47.6px;height:8px;background:#e8e8e8;opacity:1.0;filter:blur(2.5px);border-radius:3px"></div>
<div class="a" style="left:517.6px;top:524.1px;width:12.8px;height:8px;background:#ececec;opacity:1.0;filter:blur(2.5px);border-radius:3px"></div>
<div class="a" style="left:657.8px;top:524.1px;width:34.3px;height:8px;background:#e9e9e9;opacity:1.0;filter:blur(2.5px);border-radius:3px"></div>
<div class="a" style="left:694.5px;top:524.1px;width:43.8px;height:8px;background:#e6e6e6;opacity:1.0;filter:blur(2.5px);border-radius:3px"></div>
<div class="a" style="left:740.7px;top:524.1px;width:26.3px;height:8px;background:#e6e6e6;opacity:1.0;filter:blur(2.5px);border-radius:3px"></div>
<div class="a" style="left:107.2px;top:545.1px;width:33.8px;height:8px;background:#e8e8e8;opacity:1.0;filter:blur(2.2px);border-radius:3px"></div>
<div class="a" style="left:179.8px;top:545.1px;width:49.2px;height:8px;background:#e8e8e8;opacity:1.0;filter:blur(2.2px);border-radius:3px"></div>
<div class="a" style="left:240.5px;top:545.1px;width:33.1px;height:8px;background:#e8e8e8;opacity:1.0;filter:blur(2.2px);border-radius:3px"></div>
<div class="a" style="left:317.9px;top:545.1px;width:36.8px;height:8px;background:#e8e8e8;opacity:1.0;filter:blur(2.2px);border-radius:3px"></div>
<div class="a" style="left:395.2px;top:545.1px;width:45.1px;height:8px;background:#e9e9e9;opacity:1.0;filter:blur(2.5px);border-radius:3px"></div>
<div class="a" style="left:442.5px;top:545.1px;width:45.7px;height:8px;background:#ececec;opacity:1.0;filter:blur(2.5px);border-radius:3px"></div>
<div class="a" style="left:490.6px;top:545.1px;width:45.0px;height:8px;background:#e9e9e9;opacity:1.0;filter:blur(2.5px);border-radius:3px"></div>
<div class="a" style="left:537.7px;top:545.1px;width:10.9px;height:8px;background:#e6e6e6;opacity:1.0;filter:blur(2.5px);border-radius:3px"></div>
<div class="a" style="left:657.8px;top:545.1px;width:33.7px;height:8px;background:#e8e8e8;opacity:1.0;filter:blur(2.5px);border-radius:3px"></div>
<div class="a" style="left:693.5px;top:545.1px;width:46.2px;height:8px;background:#e6e6e6;opacity:1.0;filter:blur(2.5px);border-radius:3px"></div>
<div class="a" style="left:741.7px;top:545.1px;width:35.7px;height:8px;background:#ececec;opacity:1.0;filter:blur(2.5px);border-radius:3px"></div>
<div class="a" style="left:107.2px;top:566.0px;width:33.8px;height:8px;background:#e8e8e8;opacity:1.0;filter:blur(2.2px);border-radius:3px"></div>
<div class="a" style="left:181.6px;top:566.0px;width:47.4px;height:8px;background:#e8e8e8;opacity:1.0;filter:blur(2.2px);border-radius:3px"></div>
<div class="a" style="left:240.5px;top:566.0px;width:22.1px;height:8px;background:#e8e8e8;opacity:1.0;filter:blur(2.2px);border-radius:3px"></div>
<div class="a" style="left:317.9px;top:566.0px;width:58.9px;height:8px;background:#e8e8e8;opacity:1.0;filter:blur(2.2px);border-radius:3px"></div>
<div class="a" style="left:395.2px;top:566.0px;width:24.6px;height:8px;background:#e9e9e9;opacity:1.0;filter:blur(2.5px);border-radius:3px"></div>
<div class="a" style="left:421.4px;top:566.0px;width:46.6px;height:8px;background:#ececec;opacity:1.0;filter:blur(2.5px);border-radius:3px"></div>
<div class="a" style="left:657.8px;top:566.0px;width:45.7px;height:8px;background:#e6e6e6;opacity:1.0;filter:blur(2.5px);border-radius:3px"></div>
<div class="a" style="left:705.8px;top:566.0px;width:42.7px;height:8px;background:#ececec;opacity:1.0;filter:blur(2.5px);border-radius:3px"></div>
<div class="a" style="left:750.0px;top:566.0px;width:45.6px;height:8px;background:#e9e9e9;opacity:1.0;filter:blur(2.5px);border-radius:3px"></div>
<div class="a" style="left:107.9px;top:587.0px;width:33.1px;height:8px;background:#e8e8e8;opacity:1.0;filter:blur(2.2px);border-radius:3px"></div>
<div class="a" style="left:181.6px;top:587.0px;width:47.4px;height:8px;background:#e8e8e8;opacity:1.0;filter:blur(2.2px);border-radius:3px"></div>
<div class="a" style="left:240.5px;top:587.0px;width:23.9px;height:8px;background:#e8e8e8;opacity:1.0;filter:blur(2.2px);border-radius:3px"></div>
<div class="a" style="left:317.9px;top:587.0px;width:42.3px;height:8px;background:#e8e8e8;opacity:1.0;filter:blur(2.2px);border-radius:3px"></div>
<div class="a" style="left:395.2px;top:587.0px;width:26.1px;height:8px;background:#e6e6e6;opacity:1.0;filter:blur(2.5px);border-radius:3px"></div>
<div class="a" style="left:423.3px;top:587.0px;width:30.7px;height:8px;background:#e8e8e8;opacity:1.0;filter:blur(2.5px);border-radius:3px"></div>
<div class="a" style="left:455.9px;top:587.0px;width:41.3px;height:8px;background:#ececec;opacity:1.0;filter:blur(2.5px);border-radius:3px"></div>
<div class="a" style="left:498.7px;top:587.0px;width:19.6px;height:8px;background:#e9e9e9;opacity:1.0;filter:blur(2.5px);border-radius:3px"></div>
<div class="a" style="left:520.0px;top:587.0px;width:21.7px;height:8px;background:#ececec;opacity:1.0;filter:blur(2.5px);border-radius:3px"></div>
<div class="a" style="left:543.3px;top:587.0px;width:27.2px;height:8px;background:#e6e6e6;opacity:1.0;filter:blur(2.5px);border-radius:3px"></div>
<div class="a" style="left:657.8px;top:587.0px;width:28.5px;height:8px;background:#e8e8e8;opacity:1.0;filter:blur(2.5px);border-radius:3px"></div>
<div class="a" style="left:688.5px;top:587.0px;width:35.6px;height:8px;background:#e6e6e6;opacity:1.0;filter:blur(2.5px);border-radius:3px"></div>
<div class="a" style="left:725.9px;top:587.0px;width:23.7px;height:8px;background:#e9e9e9;opacity:1.0;filter:blur(2.5px);border-radius:3px"></div>
<div class="a" style="left:751.5px;top:587.0px;width:28.5px;height:8px;background:#e6e6e6;opacity:1.0;filter:blur(2.5px);border-radius:3px"></div>
<div class="a" style="left:106.0px;top:608.0px;width:35.0px;height:8px;background:#e8e8e8;opacity:1.0;filter:blur(2.2px);border-radius:3px"></div>
<div class="a" style="left:177.1px;top:608.0px;width:51.9px;height:8px;background:#e8e8e8;opacity:1.0;filter:blur(2.2px);border-radius:3px"></div>
<div class="a" style="left:240.5px;top:608.0px;width:29.5px;height:8px;background:#e8e8e8;opacity:1.0;filter:blur(2.2px);border-radius:3px"></div>
<div class="a" style="left:317.9px;top:608.0px;width:14.7px;height:8px;background:#e8e8e8;opacity:1.0;filter:blur(2.2px);border-radius:3px"></div>
<div class="a" style="left:395.2px;top:608.0px;width:29.2px;height:8px;background:#e8e8e8;opacity:1.0;filter:blur(2.5px);border-radius:3px"></div>
<div class="a" style="left:426.5px;top:608.0px;width:41.5px;height:8px;background:#ececec;opacity:1.0;filter:blur(2.5px);border-radius:3px"></div>
<div class="a" style="left:469.9px;top:608.0px;width:42.0px;height:8px;background:#e8e8e8;opacity:1.0;filter:blur(2.5px);border-radius:3px"></div>
<div class="a" style="left:514.0px;top:608.0px;width:32.6px;height:8px;background:#e8e8e8;opacity:1.0;filter:blur(2.5px);border-radius:3px"></div>
<div class="a" style="left:657.8px;top:608.0px;width:31.8px;height:8px;background:#e8e8e8;opacity:1.0;filter:blur(2.5px);border-radius:3px"></div>
<div class="a" style="left:691.4px;top:608.0px;width:34.1px;height:8px;background:#e9e9e9;opacity:1.0;filter:blur(2.5px);border-radius:3px"></div>
<div class="a" style="left:727.6px;top:608.0px;width:23.4px;height:8px;background:#e6e6e6;opacity:1.0;filter:blur(2.5px);border-radius:3px"></div>
<div class="a" style="left:100.5px;top:628.9px;width:40.5px;height:8px;background:#e8e8e8;opacity:1.0;filter:blur(2.2px);border-radius:3px"></div>
<div class="a" style="left:177.1px;top:628.9px;width:51.9px;height:8px;background:#e8e8e8;opacity:1.0;filter:blur(2.2px);border-radius:3px"></div>
<div class="a" style="left:240.5px;top:628.9px;width:35.0px;height:8px;background:#e8e8e8;opacity:1.0;filter:blur(2.2px);border-radius:3px"></div>
<div class="a" style="left:317.9px;top:628.9px;width:18.4px;height:8px;background:#e8e8e8;opacity:1.0;filter:blur(2.2px);border-radius:3px"></div>
<div class="a" style="left:395.2px;top:628.9px;width:46.1px;height:8px;background:#ececec;opacity:1.0;filter:blur(2.5px);border-radius:3px"></div>
<div class="a" style="left:443.2px;top:628.9px;width:50.3px;height:8px;background:#e6e6e6;opacity:1.0;filter:blur(2.5px);border-radius:3px"></div>
<div class="a" style="left:657.8px;top:628.9px;width:31.9px;height:8px;background:#e6e6e6;opacity:1.0;filter:blur(2.5px);border-radius:3px"></div>
<div class="a" style="left:691.3px;top:628.9px;width:42.4px;height:8px;background:#ececec;opacity:1.0;filter:blur(2.5px);border-radius:3px"></div>
<div class="a" style="left:735.9px;top:628.9px;width:39.1px;height:8px;background:#e6e6e6;opacity:1.0;filter:blur(2.5px);border-radius:3px"></div>
<div class="a" style="left:107.9px;top:649.8px;width:33.1px;height:8px;background:#e8e8e8;opacity:1.0;filter:blur(2.2px);border-radius:3px"></div>
<div class="a" style="left:181.6px;top:649.8px;width:47.4px;height:8px;background:#e8e8e8;opacity:1.0;filter:blur(2.2px);border-radius:3px"></div>
<div class="a" style="left:240.5px;top:649.8px;width:35.0px;height:8px;background:#e8e8e8;opacity:1.0;filter:blur(2.2px);border-radius:3px"></div>
<div class="a" style="left:317.9px;top:649.8px;width:25.7px;height:8px;background:#e8e8e8;opacity:1.0;filter:blur(2.2px);border-radius:3px"></div>
<div class="a" style="left:395.2px;top:649.8px;width:42.3px;height:8px;background:#ececec;opacity:1.0;filter:blur(2.5px);border-radius:3px"></div>
<div class="a" style="left:439.8px;top:649.8px;width:32.2px;height:8px;background:#e6e6e6;opacity:1.0;filter:blur(2.5px);border-radius:3px"></div>
<div class="a" style="left:473.7px;top:649.8px;width:29.7px;height:8px;background:#e6e6e6;opacity:1.0;filter:blur(2.5px);border-radius:3px"></div>
<div class="a" style="left:505.4px;top:649.8px;width:34.9px;height:8px;background:#e6e6e6;opacity:1.0;filter:blur(2.5px);border-radius:3px"></div>
<div class="a" style="left:542.5px;top:649.8px;width:9.4px;height:8px;background:#e8e8e8;opacity:1.0;filter:blur(2.5px);border-radius:3px"></div>
<div class="a" style="left:657.8px;top:649.8px;width:43.1px;height:8px;background:#e9e9e9;opacity:1.0;filter:blur(2.5px);border-radius:3px"></div>
<div class="a" style="left:703.3px;top:649.8px;width:35.4px;height:8px;background:#e6e6e6;opacity:1.0;filter:blur(2.5px);border-radius:3px"></div>
<div class="a" style="left:741.0px;top:649.8px;width:26.0px;height:8px;background:#e6e6e6;opacity:1.0;filter:blur(2.5px);border-radius:3px"></div>
<div class="a" style="left:114.5px;top:670.8px;width:26.5px;height:8px;background:#e8e8e8;opacity:1.0;filter:blur(2.2px);border-radius:3px"></div>
<div class="a" style="left:181.6px;top:670.8px;width:47.4px;height:8px;background:#e8e8e8;opacity:1.0;filter:blur(2.2px);border-radius:3px"></div>
<div class="a" style="left:240.5px;top:670.8px;width:29.5px;height:8px;background:#e8e8e8;opacity:1.0;filter:blur(2.2px);border-radius:3px"></div>
<div class="a" style="left:317.9px;top:670.8px;width:58.9px;height:8px;background:#e8e8e8;opacity:1.0;filter:blur(2.2px);border-radius:3px"></div>
<div class="a" style="left:395.2px;top:670.8px;width:46.0px;height:8px;background:#e8e8e8;opacity:1.0;filter:blur(2.5px);border-radius:3px"></div>
<div class="a" style="left:442.8px;top:670.8px;width:27.7px;height:8px;background:#ececec;opacity:1.0;filter:blur(2.5px);border-radius:3px"></div>
<div class="a" style="left:472.6px;top:670.8px;width:42.8px;height:8px;background:#ececec;opacity:1.0;filter:blur(2.5px);border-radius:3px"></div>
<div class="a" style="left:517.2px;top:670.8px;width:23.4px;height:8px;background:#e8e8e8;opacity:1.0;filter:blur(2.5px);border-radius:3px"></div>
<div class="a" style="left:542.3px;top:670.8px;width:39.2px;height:8px;background:#ececec;opacity:1.0;filter:blur(2.5px);border-radius:3px"></div>
<div class="a" style="left:657.8px;top:670.8px;width:34.7px;height:8px;background:#e8e8e8;opacity:1.0;filter:blur(2.5px);border-radius:3px"></div>
<div class="a" style="left:695.0px;top:670.8px;width:29.3px;height:8px;background:#e9e9e9;opacity:1.0;filter:blur(2.5px);border-radius:3px"></div>
<div class="a" style="left:726.0px;top:670.8px;width:45.9px;height:8px;background:#e8e8e8;opacity:1.0;filter:blur(2.5px);border-radius:3px"></div>
<div class="a" style="left:774.2px;top:670.8px;width:27.3px;height:8px;background:#e9e9e9;opacity:1.0;filter:blur(2.5px);border-radius:3px"></div>
<div class="a" style="left:107.2px;top:691.8px;width:33.8px;height:8px;background:#e8e8e8;opacity:1.0;filter:blur(2.2px);border-radius:3px"></div>
<div class="a" style="left:179.8px;top:691.8px;width:49.2px;height:8px;background:#e8e8e8;opacity:1.0;filter:blur(2.2px);border-radius:3px"></div>
<div class="a" style="left:240.5px;top:691.8px;width:35.0px;height:8px;background:#e8e8e8;opacity:1.0;filter:blur(2.2px);border-radius:3px"></div>
<div class="a" style="left:317.9px;top:691.8px;width:46.1px;height:8px;background:#e8e8e8;opacity:1.0;filter:blur(2.2px);border-radius:3px"></div>
<div class="a" style="left:395.2px;top:691.8px;width:22.9px;height:8px;background:#e9e9e9;opacity:1.0;filter:blur(2.5px);border-radius:3px"></div>
<div class="a" style="left:420.1px;top:691.8px;width:32.5px;height:8px;background:#e9e9e9;opacity:1.0;filter:blur(2.5px);border-radius:3px"></div>
<div class="a" style="left:454.8px;top:691.8px;width:44.0px;height:8px;background:#ececec;opacity:1.0;filter:blur(2.5px);border-radius:3px"></div>
<div class="a" style="left:657.8px;top:691.8px;width:40.6px;height:8px;background:#ececec;opacity:1.0;filter:blur(2.5px);border-radius:3px"></div>
<div class="a" style="left:700.0px;top:691.8px;width:33.5px;height:8px;background:#e8e8e8;opacity:1.0;filter:blur(2.5px);border-radius:3px"></div>
<div class="a" style="left:735.9px;top:691.8px;width:44.1px;height:8px;background:#ececec;opacity:1.0;filter:blur(2.5px);border-radius:3px"></div>
<div class="a" style="left:107.2px;top:712.7px;width:33.8px;height:8px;background:#e8e8e8;opacity:1.0;filter:blur(2.2px);border-radius:3px"></div>
<div class="a" style="left:177.1px;top:712.7px;width:51.9px;height:8px;background:#e8e8e8;opacity:1.0;filter:blur(2.2px);border-radius:3px"></div>
<div class="a" style="left:240.5px;top:712.7px;width:40.5px;height:8px;background:#e8e8e8;opacity:1.0;filter:blur(2.2px);border-radius:3px"></div>
<div class="a" style="left:317.9px;top:712.7px;width:31.1px;height:8px;background:#e8e8e8;opacity:1.0;filter:blur(2.2px);border-radius:3px"></div>
<div class="a" style="left:395.2px;top:712.7px;width:44.7px;height:8px;background:#e9e9e9;opacity:1.0;filter:blur(2.5px);border-radius:3px"></div>
<div class="a" style="left:441.7px;top:712.7px;width:26.0px;height:8px;background:#e8e8e8;opacity:1.0;filter:blur(2.5px);border-radius:3px"></div>
<div class="a" style="left:470.0px;top:712.7px;width:24.0px;height:8px;background:#e6e6e6;opacity:1.0;filter:blur(2.5px);border-radius:3px"></div>
<div class="a" style="left:496.1px;top:712.7px;width:25.2px;height:8px;background:#e8e8e8;opacity:1.0;filter:blur(2.5px);border-radius:3px"></div>
<div class="a" style="left:523.3px;top:712.7px;width:43.9px;height:8px;background:#e6e6e6;opacity:1.0;filter:blur(2.5px);border-radius:3px"></div>
<div class="a" style="left:569.1px;top:712.7px;width:30.6px;height:8px;background:#e8e8e8;opacity:1.0;filter:blur(2.5px);border-radius:3px"></div>
<div class="a" style="left:657.8px;top:712.7px;width:41.5px;height:8px;background:#e6e6e6;opacity:1.0;filter:blur(2.5px);border-radius:3px"></div>
<div class="a" style="left:701.7px;top:712.7px;width:19.4px;height:8px;background:#e9e9e9;opacity:1.0;filter:blur(2.5px);border-radius:3px"></div>
<div class="a" style="left:723.5px;top:712.7px;width:46.1px;height:8px;background:#ececec;opacity:1.0;filter:blur(2.5px);border-radius:3px"></div>
<div class="a" style="left:102.4px;top:733.6px;width:38.6px;height:8px;background:#e8e8e8;opacity:1.0;filter:blur(2.2px);border-radius:3px"></div>
<div class="a" style="left:185.2px;top:733.6px;width:43.8px;height:8px;background:#e8e8e8;opacity:1.0;filter:blur(2.2px);border-radius:3px"></div>
<div class="a" style="left:240.5px;top:733.6px;width:38.7px;height:8px;background:#e8e8e8;opacity:1.0;filter:blur(2.2px);border-radius:3px"></div>
<div class="a" style="left:317.9px;top:733.6px;width:36.8px;height:8px;background:#e8e8e8;opacity:1.0;filter:blur(2.2px);border-radius:3px"></div>
<div class="a" style="left:395.2px;top:733.6px;width:25.3px;height:8px;background:#ececec;opacity:1.0;filter:blur(2.5px);border-radius:3px"></div>
<div class="a" style="left:422.2px;top:733.6px;width:25.8px;height:8px;background:#e9e9e9;opacity:1.0;filter:blur(2.5px);border-radius:3px"></div>
<div class="a" style="left:449.6px;top:733.6px;width:43.9px;height:8px;background:#e6e6e6;opacity:1.0;filter:blur(2.5px);border-radius:3px"></div>
<div class="a" style="left:657.8px;top:733.6px;width:27.4px;height:8px;background:#e6e6e6;opacity:1.0;filter:blur(2.5px);border-radius:3px"></div>
<div class="a" style="left:687.1px;top:733.6px;width:39.9px;height:8px;background:#e6e6e6;opacity:1.0;filter:blur(2.5px);border-radius:3px"></div>
<div class="a" style="left:728.6px;top:733.6px;width:20.8px;height:8px;background:#ececec;opacity:1.0;filter:blur(2.5px);border-radius:3px"></div>
<div class="a" style="left:751.7px;top:733.6px;width:26.8px;height:8px;background:#ececec;opacity:1.0;filter:blur(2.5px);border-radius:3px"></div>
<div class="a" style="left:780.3px;top:733.6px;width:15.7px;height:8px;background:#e8e8e8;opacity:1.0;filter:blur(2.5px);border-radius:3px"></div>
<div class="a" style="left:815.0px;top:733.6px;width:42.5px;height:8px;background:#e8e8e8;opacity:0.7;filter:blur(2.2px);border-radius:3px"></div>
<div class="a" style="left:107.9px;top:754.6px;width:33.1px;height:8px;background:#e8e8e8;opacity:1.0;filter:blur(2.2px);border-radius:3px"></div>
<div class="a" style="left:181.6px;top:754.6px;width:47.4px;height:8px;background:#e8e8e8;opacity:1.0;filter:blur(2.2px);border-radius:3px"></div>
<div class="a" style="left:240.5px;top:754.6px;width:33.1px;height:8px;background:#e8e8e8;opacity:1.0;filter:blur(2.2px);border-radius:3px"></div>
<div class="a" style="left:317.9px;top:754.6px;width:33.1px;height:8px;background:#e8e8e8;opacity:1.0;filter:blur(2.2px);border-radius:3px"></div>
<div class="a" style="left:395.2px;top:754.6px;width:29.4px;height:8px;background:#e6e6e6;opacity:1.0;filter:blur(2.5px);border-radius:3px"></div>
<div class="a" style="left:426.2px;top:754.6px;width:37.3px;height:8px;background:#e8e8e8;opacity:1.0;filter:blur(2.5px);border-radius:3px"></div>
<div class="a" style="left:465.7px;top:754.6px;width:32.7px;height:8px;background:#e6e6e6;opacity:1.0;filter:blur(2.5px);border-radius:3px"></div>
<div class="a" style="left:500.1px;top:754.6px;width:30.6px;height:8px;background:#e8e8e8;opacity:1.0;filter:blur(2.5px);border-radius:3px"></div>
<div class="a" style="left:657.8px;top:754.6px;width:44.6px;height:8px;background:#ececec;opacity:1.0;filter:blur(2.5px);border-radius:3px"></div>
<div class="a" style="left:704.8px;top:754.6px;width:20.9px;height:8px;background:#e6e6e6;opacity:1.0;filter:blur(2.5px);border-radius:3px"></div>
<div class="a" style="left:728.2px;top:754.6px;width:29.2px;height:8px;background:#ececec;opacity:1.0;filter:blur(2.5px);border-radius:3px"></div>
<div class="a" style="left:759.7px;top:754.6px;width:9.9px;height:8px;background:#e6e6e6;opacity:1.0;filter:blur(2.5px);border-radius:3px"></div>
<div class="a" style="left:815.0px;top:754.6px;width:42.0px;height:8px;background:#e8e8e8;opacity:0.7;filter:blur(2.2px);border-radius:3px"></div>
<div class="a" style="left:114.5px;top:775.5px;width:26.5px;height:8px;background:#e8e8e8;opacity:1.0;filter:blur(2.2px);border-radius:3px"></div>
<div class="a" style="left:177.1px;top:775.5px;width:51.9px;height:8px;background:#e8e8e8;opacity:1.0;filter:blur(2.2px);border-radius:3px"></div>
<div class="a" style="left:240.5px;top:775.5px;width:27.5px;height:8px;background:#e8e8e8;opacity:1.0;filter:blur(2.2px);border-radius:3px"></div>
<div class="a" style="left:317.9px;top:775.5px;width:31.1px;height:8px;background:#e8e8e8;opacity:1.0;filter:blur(2.2px);border-radius:3px"></div>
<div class="a" style="left:395.2px;top:775.5px;width:38.0px;height:8px;background:#e9e9e9;opacity:1.0;filter:blur(2.5px);border-radius:3px"></div>
<div class="a" style="left:435.2px;top:775.5px;width:19.8px;height:8px;background:#e9e9e9;opacity:1.0;filter:blur(2.5px);border-radius:3px"></div>
<div class="a" style="left:456.8px;top:775.5px;width:39.8px;height:8px;background:#ececec;opacity:1.0;filter:blur(2.5px);border-radius:3px"></div>
<div class="a" style="left:498.9px;top:775.5px;width:8.1px;height:8px;background:#e8e8e8;opacity:1.0;filter:blur(2.5px);border-radius:3px"></div>
<div class="a" style="left:657.8px;top:775.5px;width:21.7px;height:8px;background:#e8e8e8;opacity:1.0;filter:blur(2.5px);border-radius:3px"></div>
<div class="a" style="left:681.9px;top:775.5px;width:22.2px;height:8px;background:#e8e8e8;opacity:1.0;filter:blur(2.5px);border-radius:3px"></div>
<div class="a" style="left:706.0px;top:775.5px;width:39.6px;height:8px;background:#ececec;opacity:1.0;filter:blur(2.5px);border-radius:3px"></div>
<div class="a" style="left:747.7px;top:775.5px;width:21.9px;height:8px;background:#e9e9e9;opacity:1.0;filter:blur(2.5px);border-radius:3px"></div>
<div class="a" style="left:63px;top:391.9px;width:799px;height:1px;background:#fafafa"></div>
<div class="a" style="left:63px;top:412.9px;width:799px;height:1px;background:#fafafa"></div>
<div class="a" style="left:63px;top:433.9px;width:799px;height:1px;background:#fafafa"></div>
<div class="a" style="left:63px;top:454.8px;width:799px;height:1px;background:#fafafa"></div>
<div class="a" style="left:63px;top:475.8px;width:799px;height:1px;background:#fafafa"></div>
<div class="a" style="left:63px;top:496.7px;width:799px;height:1px;background:#fafafa"></div>
<div class="a" style="left:63px;top:517.6px;width:799px;height:1px;background:#fafafa"></div>
<div class="a" style="left:63px;top:538.6px;width:799px;height:1px;background:#fafafa"></div>
<div class="a" style="left:63px;top:559.5px;width:799px;height:1px;background:#fafafa"></div>
<div class="a" style="left:63px;top:580.5px;width:799px;height:1px;background:#fafafa"></div>
<div class="a" style="left:63px;top:601.5px;width:799px;height:1px;background:#fafafa"></div>
<div class="a" style="left:63px;top:622.4px;width:799px;height:1px;background:#fafafa"></div>
<div class="a" style="left:63px;top:643.3px;width:799px;height:1px;background:#fafafa"></div>
<div class="a" style="left:63px;top:664.3px;width:799px;height:1px;background:#fafafa"></div>
<div class="a" style="left:63px;top:685.2px;width:799px;height:1px;background:#fafafa"></div>
<div class="a" style="left:63px;top:706.2px;width:799px;height:1px;background:#fafafa"></div>
<div class="a" style="left:63px;top:727.1px;width:799px;height:1px;background:#fafafa"></div>
<div class="a" style="left:63px;top:748.1px;width:799px;height:1px;background:#fafafa"></div>
<div class="a" style="left:63px;top:769.0px;width:799px;height:1px;background:#fafafa"></div>
<div class="a" style="left:63px;top:790.0px;width:799px;height:1px;background:#fafafa"></div>
<div class="a" style="left:74.7px;top:796.5px;width:11.1px;height:8px;background:#e8e8e8;opacity:0.5;filter:blur(2.2px);border-radius:3px"></div>
<div class="a" style="left:634px;top:845px;width:67px;height:22px;border:1px solid #3b5a4a;background:#fff"></div>
<div class="a" style="left:683px;top:845px;width:1px;height:22px;background:#3b5a4a"></div>
<svg style="left:689px;top:854px" width="6" height="4" viewBox="0 0 6 4"><path d="M0 0h6L3 3.5z" fill="#555"/></svg>
<div class="t" style="left:508.5px;width:300px;text-align:center;top:850.69px;font-size:11px;color:#4b5d52;font-weight:normal;">Load</div>
<div class="a" style="left:714px;top:845px;width:92px;height:22px;border:1px solid #c6c6c6;background:#fff"></div>
<div class="t" style="left:609.8px;width:300px;text-align:center;top:851.20px;font-size:10.4px;color:#363636;font-weight:normal;">Transform Data</div>
<div class="a" style="left:819px;top:845px;width:60px;height:22px;border:1px solid #c6c6c6;background:#fff"></div>
<div class="t" style="left:699px;width:300px;text-align:center;top:851.37px;font-size:10.2px;color:#363636;font-weight:normal;">Cancel</div>
</body></html>
